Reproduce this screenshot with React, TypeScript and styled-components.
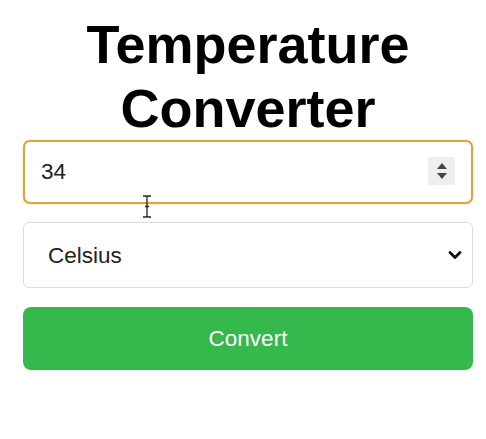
import styled, { createGlobalStyle } from "styled-components";
import { ChevronDown } from "lucide-react";

const GlobalStyle = createGlobalStyle`
  body {
    margin: 0;
    background: #ffffff;
    font-family: "Liberation Sans", Arial, sans-serif;
  }
`;

const Page = styled.div`
  width: 450px;
  padding: 0 13px 0 23px;
  display: flex;
  flex-direction: column;
`;

const Title = styled.h1`
  margin: 12px 0 0 0;
  font-size: 54px;
  line-height: 64px;
  font-weight: bold;
  text-align: center;
  color: #000;
`;

const Form = styled.div`
  display: flex;
  flex-direction: column;
  gap: 18px;
`;

const Field = styled.div`
  position: relative;
  display: flex;
`;

const NumberInput = styled.input`
  width: 100%;
  height: 64px;
  box-sizing: border-box;
  padding: 0 16px;
  border: 2px solid #d9a73a;
  border-radius: 7px;
  box-shadow: 0 0 2px rgba(217, 167, 58, 0.6);
  font-family: "Liberation Sans", Arial, sans-serif;
  font-size: 22.5px;
  color: #222;
  outline: none;
  -moz-appearance: textfield;

  &::-webkit-outer-spin-button,
  &::-webkit-inner-spin-button {
    -webkit-appearance: none;
    margin: 0;
  }
`;

const Spinner = styled.div`
  position: absolute;
  top: 17px;
  right: 18px;
  width: 27px;
  height: 28px;
  background: #eeeeee;
  display: flex;
  align-items: center;
  justify-content: center;
  pointer-events: none;
`;

const Select = styled.select`
  width: 100%;
  height: 66px;
  box-sizing: border-box;
  padding: 0 24px;
  border: 1px solid #dddddd;
  border-radius: 6px;
  background: #fff;
  font-family: "Liberation Sans", Arial, sans-serif;
  font-size: 22.5px;
  color: #222;
  appearance: none;
  outline: none;
`;

const Chevron = styled.span`
  position: absolute;
  right: 8px;
  top: 23px;
  display: flex;
  color: #111;
  pointer-events: none;
`;

const ConvertButton = styled.button`
  height: 63px;
  margin-top: 1px;
  border: none;
  border-radius: 8px;
  background: #35b84c;
  color: #fff;
  font-family: "Liberation Sans", Arial, sans-serif;
  font-size: 22.5px;
  cursor: pointer;
`;

const Cursor = styled.svg`
  position: absolute;
  left: 119px;
  top: 55px;
  pointer-events: none;
`;

export default function App() {
  return (
    <>
      <GlobalStyle />
      <Page>
        <Title>Temperature Converter</Title>
        <Form>
          <Field>
            <NumberInput type="number" defaultValue={34} />
            <Spinner>
              <svg width="12" height="18" viewBox="0 0 12 18">
                <path d="M6 1 L11 7 L1 7 Z" fill="#444" />
                <path d="M6 17 L11 11 L1 11 Z" fill="#444" />
              </svg>
            </Spinner>
            <Cursor width="10" height="23" viewBox="0 0 10 23">
              <path
                d="M1 1 H4 Q5 1 5 2 V21 Q5 22 4 22 H1 M9 1 H6 Q5 1 5 2 M5 21 Q5 22 6 22 H9 M3 11.5 H7"
                stroke="#222"
                strokeWidth="1.3"
                fill="none"
              />
            </Cursor>
          </Field>
          <Field>
            <Select defaultValue="celsius">
              <option value="celsius">Celsius</option>
              <option value="fahrenheit">Fahrenheit</option>
              <option value="kelvin">Kelvin</option>
            </Select>
            <Chevron>
              <ChevronDown size={20} strokeWidth={3.4} />
            </Chevron>
          </Field>
          <ConvertButton>Convert</ConvertButton>
        </Form>
      </Page>
    </>
  );
}
